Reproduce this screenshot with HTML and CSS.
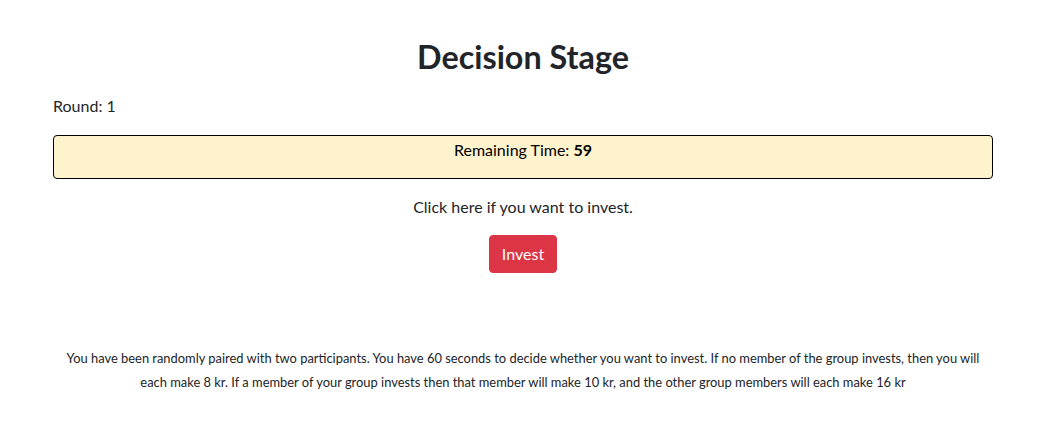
FILE: index.html
```html
<!DOCTYPE html>
<html lang="en">
<head>
<meta charset="utf-8">
<title>Decision Stage</title>
<link rel="stylesheet" href="styles.css">
</head>
<body>
<main class="container">
  <h1 class="title">Decision Stage</h1>
  <p class="round">Round: 1</p>
  <div class="timer">Remaining Time: <strong>59</strong></div>
  <div class="decision">
    <p class="prompt">Click here if you want to invest.</p>
    <button class="btn-invest" type="button">Invest</button>
  </div>
  <p class="info">You have been randomly paired with two participants. You have 60 seconds to decide whether you want to invest. If no member of the group invests, then you will each make 8 kr. If a member of your group invests then that member will make 10 kr, and the other group members will each make 16 kr</p>
</main>
</body>
</html>
```
FILE: styles.css
```css
* { box-sizing: border-box; }

body {
  margin: 0;
  background: #ffffff;
  color: #212529;
  font-family: "Lato", "Open Sans", sans-serif;
  font-size: 16px;
  line-height: 24px;
}

.container {
  width: 942px;
  margin: 0 auto;
  padding: 38px 0 0 2px;
}

.title {
  margin: 0;
  font-size: 32.3px;
  line-height: 38px;
  font-weight: 700;
  text-align: center;
  color: #212529;
}

.round {
  margin: 18px 0 17px;
}

.timer {
  border: 1px solid #000000;
  border-radius: 4px;
  background: #fff3cd;
  color: #000000;
  text-align: center;
  padding: 2px 0 16px;
}

.timer strong {
  font-weight: 700;
}

.decision {
  display: flex;
  flex-direction: column;
  align-items: center;
  gap: 16px;
  margin-top: 16px;
}

.prompt {
  margin: 0;
}

.btn-invest {
  font-family: inherit;
  font-size: 16px;
  line-height: 24px;
  color: #ffffff;
  background: #dc3545;
  border: 1px solid #dc3545;
  border-radius: 4px;
  padding: 6px 12px;
  cursor: pointer;
}

.info {
  margin: 73px 0 0;
  padding: 0 4px;
  font-size: 12.9px;
  line-height: 24px;
  text-align: center;
}
```
